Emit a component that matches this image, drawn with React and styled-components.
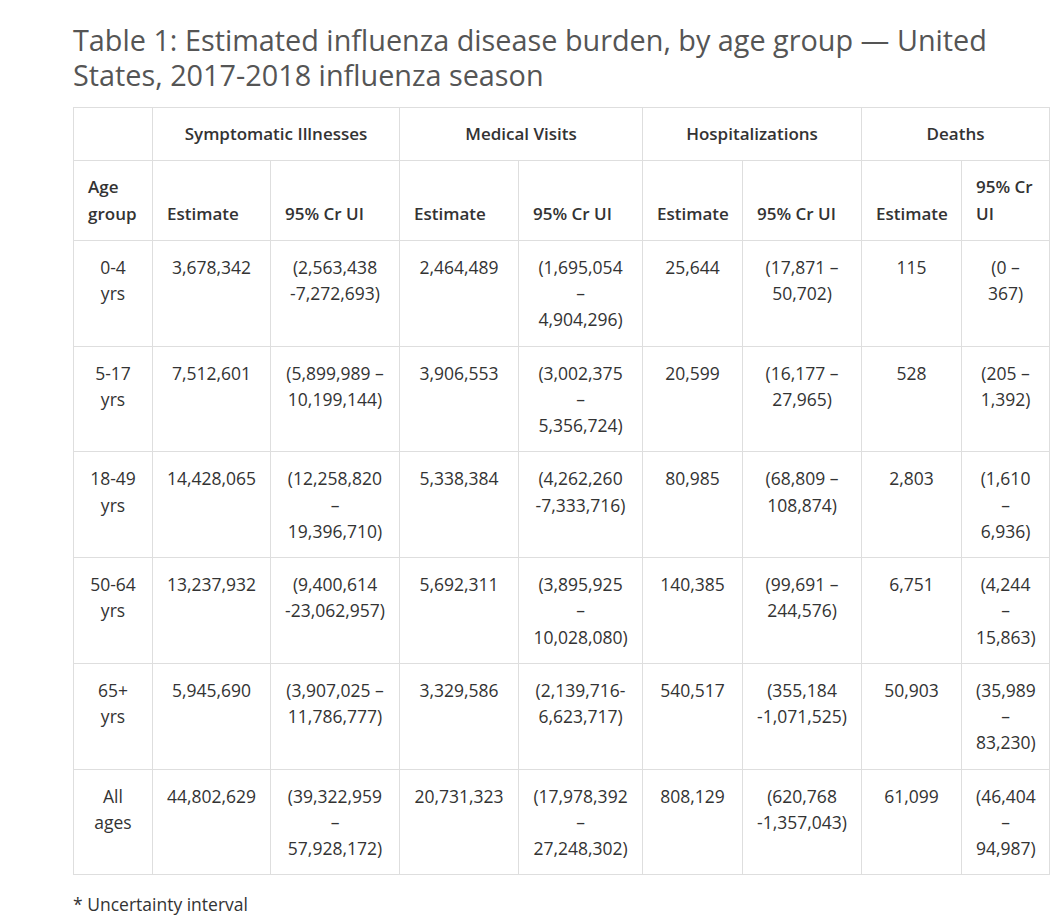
import React from "react";
import styled, { createGlobalStyle } from "styled-components";

const Global = createGlobalStyle`
  html, body { margin: 0; padding: 0; background: #fff; }
  body { font-family: "Open Sans", "Noto Sans", sans-serif; color: #333; }
`;

const Page = styled.div`
  padding: 22px 0 0 73px;
`;

const Title = styled.h1`
  margin: 0 0 15px 0;
  width: 960px;
  font-size: 28.8px;
  line-height: 35px;
  font-weight: 400;
  color: #555;
`;

const Table = styled.table`
  width: 976px;
  table-layout: fixed;
  border-collapse: collapse;
  font-size: 17.5px;
  line-height: 26.25px;
  color: #333;
`;

const Cell = styled.td`
  border: 1px solid #dedede;
  padding: 13px 14px;
  vertical-align: top;
  text-align: center;
`;

const Head = styled.th`
  border: 1px solid #dedede;
  padding: 13px 14px;
  font-size: 17px;
  font-weight: 600;
  text-align: ${(p) => (p.$center ? "center" : "left")};
  vertical-align: ${(p) => (p.$center ? "middle" : "bottom")};
`;

const Note = styled.p`
  margin: 16px 0 0 0;
  font-size: 17.5px;
  line-height: 26px;
`;

const widths = [79, 118, 129, 119, 124, 100, 119, 100, 88];

const rows = [
  ["0-4 yrs", "3,678,342", "(2,563,438 -7,272,693)", "2,464,489", "(1,695,054 – 4,904,296)", "25,644", "(17,871 – 50,702)", "115", "(0 – 367)"],
  ["5-17 yrs", "7,512,601", "(5,899,989 – 10,199,144)", "3,906,553", "(3,002,375 – 5,356,724)", "20,599", "(16,177 – 27,965)", "528", "(205 – 1,392)"],
  ["18-49 yrs", "14,428,065", "(12,258,820 – 19,396,710)", "5,338,384", "(4,262,260 -7,333,716)", "80,985", "(68,809 – 108,874)", "2,803", "(1,610 – 6,936)"],
  ["50-64 yrs", "13,237,932", "(9,400,614 -23,062,957)", "5,692,311", "(3,895,925 – 10,028,080)", "140,385", "(99,691 – 244,576)", "6,751", "(4,244 – 15,863)"],
  ["65+ yrs", "5,945,690", "(3,907,025 – 11,786,777)", "3,329,586", ["(2,139,716-", "6,623,717)"], "540,517", "(355,184 -1,071,525)", "50,903", "(35,989 – 83,230)"],
  ["All ages", "44,802,629", "(39,322,959 – 57,928,172)", "20,731,323", "(17,978,392 – 27,248,302)", "808,129", "(620,768 -1,357,043)", "61,099", "(46,404 – 94,987)"],
];

const groups = ["Symptomatic Illnesses", "Medical Visits", "Hospitalizations", "Deaths"];

function renderValue(v) {
  if (Array.isArray(v)) {
    return (
      <>
        {v[0]}
        <wbr />
        {v[1]}
      </>
    );
  }
  return v;
}

export default function App() {
  return (
    <Page>
      <Global />
      <Title>
        Table 1: Estimated influenza disease burden, by age group — United States, 2017-2018 influenza season
      </Title>
      <Table>
        <colgroup>
          {widths.map((w, i) => (
            <col key={i} style={{ width: w }} />
          ))}
        </colgroup>
        <thead>
          <tr>
            <Head $center></Head>
            {groups.map((g) => (
              <Head $center colSpan={2} key={g}>
                {g}
              </Head>
            ))}
          </tr>
          <tr>
            <Head>Age group</Head>
            {groups.map((g) => (
              <React.Fragment key={g}>
                <Head>Estimate</Head>
                <Head>95% Cr UI</Head>
              </React.Fragment>
            ))}
          </tr>
        </thead>
        <tbody>
          {rows.map((r) => (
            <tr key={r[0]}>
              {r.map((v, i) => (
                <Cell key={i}>{renderValue(v)}</Cell>
              ))}
            </tr>
          ))}
        </tbody>
      </Table>
      <Note>* Uncertainty interval</Note>
    </Page>
  );
}
